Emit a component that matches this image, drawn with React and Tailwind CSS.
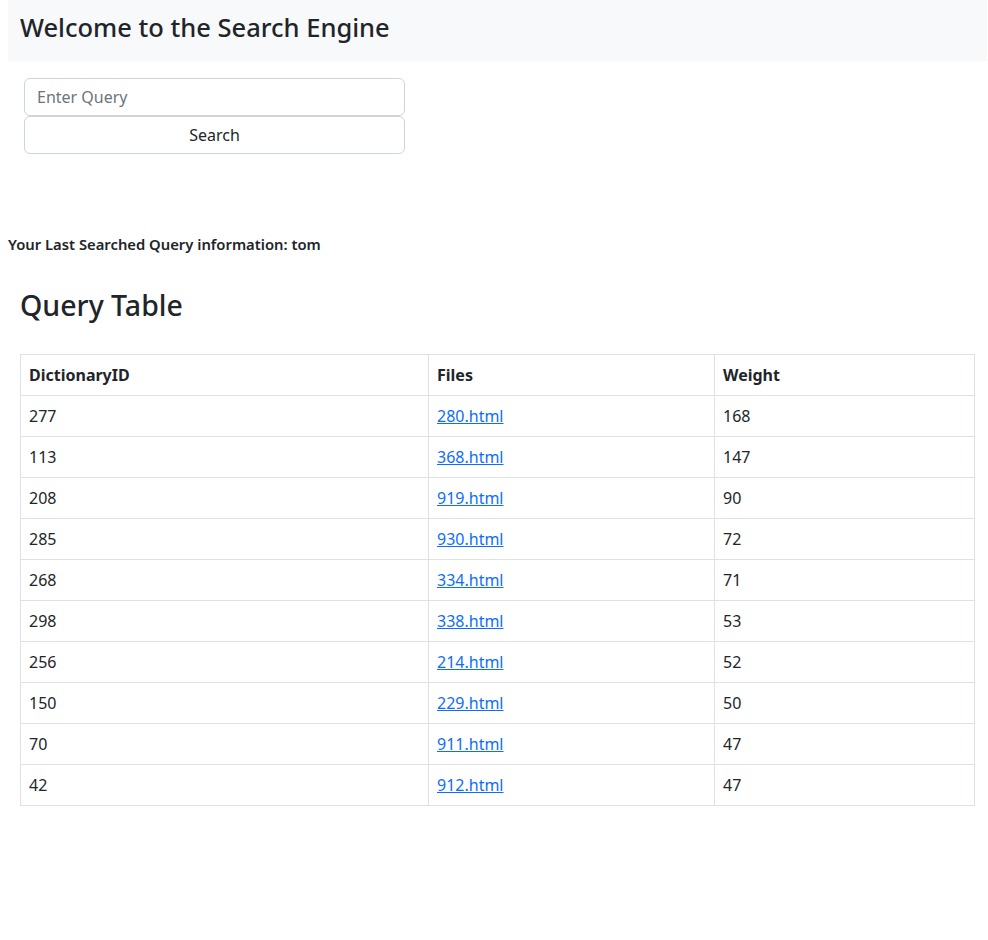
import React from 'react';

const rows = [
    { id: 277, file: '280.html', weight: 168 },
    { id: 113, file: '368.html', weight: 147 },
    { id: 208, file: '919.html', weight: 90 },
    { id: 285, file: '930.html', weight: 72 },
    { id: 268, file: '334.html', weight: 71 },
    { id: 298, file: '338.html', weight: 53 },
    { id: 256, file: '214.html', weight: 52 },
    { id: 150, file: '229.html', weight: 50 },
    { id: 70, file: '911.html', weight: 47 },
    { id: 42, file: '912.html', weight: 47 },
];

const App = () => {
    return (
        <div className="min-h-screen bg-white text-[#212529] font-['Noto_Sans',sans-serif]">
            <div className="ml-[8px] mr-[1px] h-[61px] bg-[#f8f9fa] px-[12px] pt-[13px]">
                <h1 className="text-[25.5px] font-medium leading-[28px]">Welcome to the Search Engine</h1>
            </div>

            <div className="ml-[24px] mt-[17px] w-[381px] flex flex-col">
                <input
                    type="text"
                    placeholder="Enter Query"
                    className="h-[38px] border border-[#ced4da] rounded-[6px] px-[12px] text-[16px] placeholder:text-[#6c757d] outline-none"
                />
                <button className="h-[38px] border border-[#ced4da] rounded-[6px] text-[16px] text-[#212529] bg-white">
                    Search
                </button>
            </div>

            <p className="ml-[8px] mt-[79px] text-[14.8px] font-semibold leading-[22px]">
                Your Last Searched Query information: tom
            </p>

            <div className="ml-[20px] w-[955px]">
                <h2 className="mt-[36px] text-[28.5px] font-medium leading-none">Query Table</h2>
                <table className="mt-[34px] w-[955px] table-fixed border-collapse text-[16px]">
                    <thead>
                        <tr className="h-[41px]">
                            <th className="w-[408px] border border-[#dee2e6] px-[8px] text-left font-bold">DictionaryID</th>
                            <th className="w-[286px] border border-[#dee2e6] px-[8px] text-left font-bold">Files</th>
                            <th className="border border-[#dee2e6] px-[8px] text-left font-bold">Weight</th>
                        </tr>
                    </thead>
                    <tbody>
                        {rows.map((r) => (
                            <tr key={r.file} className="h-[41px]">
                                <td className="border border-[#dee2e6] px-[8px]">{r.id}</td>
                                <td className="border border-[#dee2e6] px-[8px]">
                                    <a href="#" className="text-[#0d6efd] underline">{r.file}</a>
                                </td>
                                <td className="border border-[#dee2e6] px-[8px]">{r.weight}</td>
                            </tr>
                        ))}
                    </tbody>
                </table>
            </div>
        </div>
    );
};

export default App;
